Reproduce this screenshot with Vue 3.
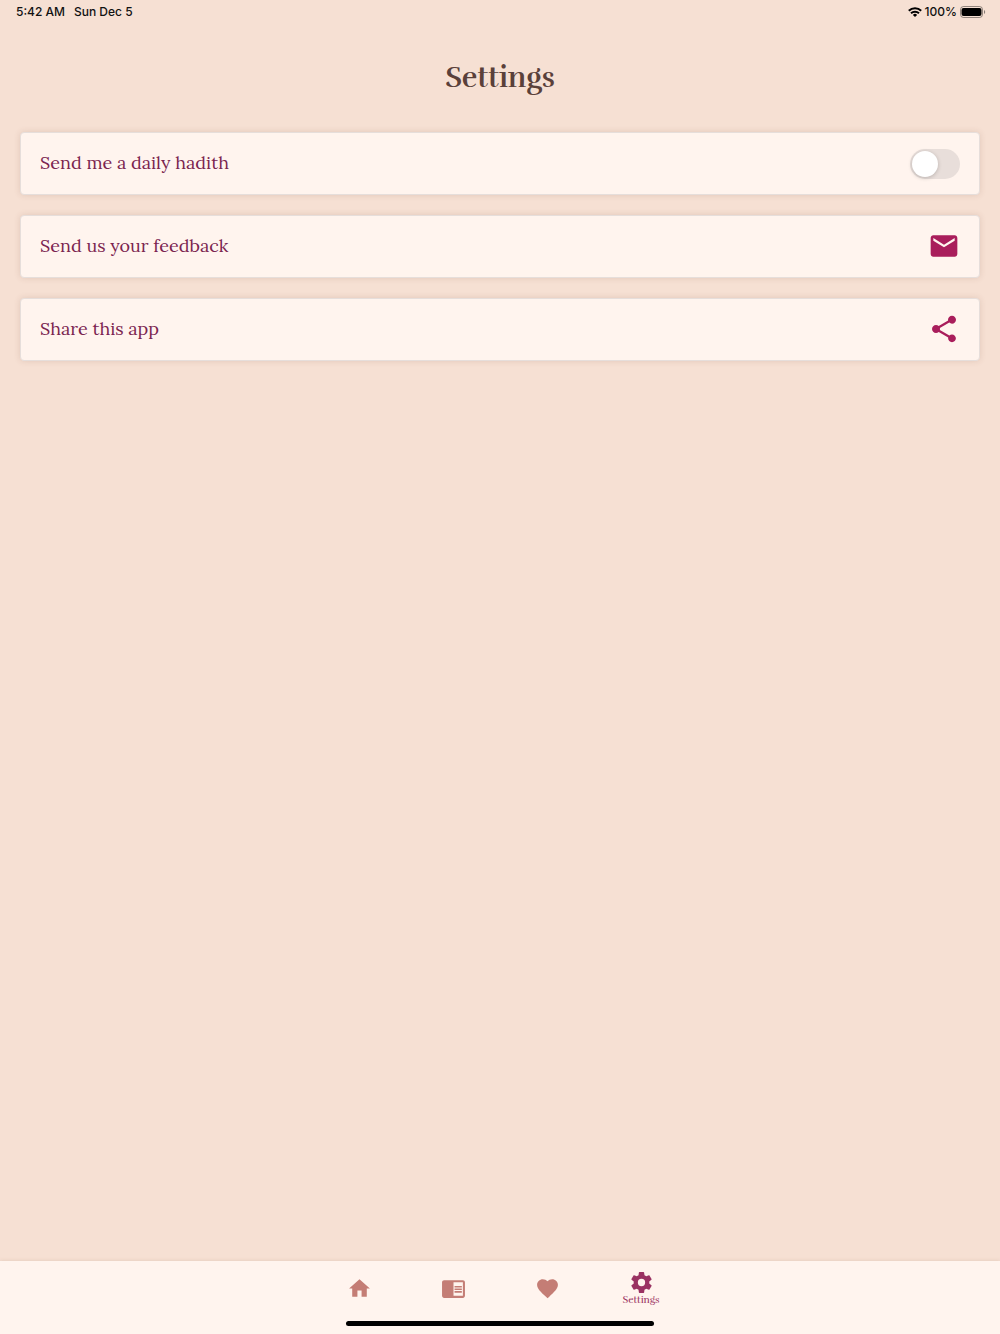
<script setup>
import { ref } from 'vue'

const dailyHadith = ref(false)
const active = ref('Settings')

const actions = [
  {
    label: 'Send us your feedback',
    icon: 'M20 4H4c-1.1 0-1.99.9-1.99 2L2 18c0 1.1.9 2 2 2h16c1.1 0 2-.9 2-2V6c0-1.1-.9-2-2-2zm0 4l-8 5-8-5V6l8 5 8-5v2z',
  },
  {
    label: 'Share this app',
    icon: 'M18 16.08c-.76 0-1.44.3-1.96.77L8.91 12.7c.05-.23.09-.46.09-.7s-.04-.47-.09-.7l7.05-4.11c.54.5 1.25.81 2.04.81 1.66 0 3-1.34 3-3s-1.34-3-3-3-3 1.34-3 3c0 .24.04.47.09.7L8.04 9.81C7.5 9.31 6.79 9 6 9c-1.66 0-3 1.34-3 3s1.34 3 3 3c.79 0 1.5-.31 2.04-.81l7.12 4.16c-.05.21-.08.43-.08.65 0 1.61 1.31 2.92 2.92 2.92s2.92-1.31 2.92-2.92-1.31-2.92-2.92-2.92z',
  },
]

const tabs = [
  { name: 'Home', icon: 'M10 20v-6h4v6h5v-8h3L12 3 2 12h3v8z' },
  {
    name: 'Read',
    icon: 'M13 12h7v1.5h-7zm0-2.5h7V11h-7zm0 5h7V16h-7zM21 4H3c-1.1 0-2 .9-2 2v13c0 1.1.9 2 2 2h18c1.1 0 2-.9 2-2V6c0-1.1-.9-2-2-2zm0 15h-9V6h9v13z',
  },
  {
    name: 'Favorites',
    icon: 'M12 21.35l-1.45-1.32C5.4 15.36 2 12.28 2 8.5 2 5.42 4.42 3 7.5 3c1.74 0 3.41.81 4.5 2.09C13.09 3.81 14.76 3 16.5 3 19.58 3 22 5.42 22 8.5c0 3.78-3.4 6.86-8.55 11.54L12 21.35z',
  },
  {
    name: 'Settings',
    icon: 'M12 15.5A3.5 3.5 0 0 1 8.5 12 3.5 3.5 0 0 1 12 8.5a3.5 3.5 0 0 1 3.5 3.5 3.5 3.5 0 0 1-3.5 3.5m7.43-2.53c.04-.32.07-.64.07-.97s-.03-.66-.07-1l2.11-1.63c.19-.15.24-.42.12-.64l-2-3.46c-.12-.22-.39-.31-.61-.22l-2.49 1c-.52-.39-1.06-.73-1.69-.98l-.37-2.65A.506.506 0 0 0 14 2h-4c-.25 0-.46.18-.5.42l-.37 2.65c-.63.25-1.17.59-1.69.98l-2.49-1c-.22-.09-.49 0-.61.22l-2 3.46c-.13.22-.07.49.12.64L4.57 11c-.04.34-.07.67-.07 1s.03.65.07.97l-2.11 1.66c-.19.15-.25.42-.12.64l2 3.46c.12.22.39.3.61.22l2.49-1.01c.52.4 1.06.74 1.69.99l.37 2.65c.04.24.25.42.5.42h4c.25 0 .46-.18.5-.42l.37-2.65c.63-.26 1.17-.59 1.69-.99l2.49 1.01c.22.08.49 0 .61-.22l2-3.46c.12-.22.07-.49-.12-.64z',
  },
]
</script>

<template>
  <div class="app">
    <header class="status">
      <div class="status-group left">
        <span>5:42 AM</span>
        <span>Sun Dec 5</span>
      </div>
      <div class="status-group">
        <svg class="wifi" viewBox="0 0 14 10" aria-hidden="true">
          <g fill="none" stroke="#000" stroke-width="2">
            <path d="M.8 3.8a8.8 8.8 0 0 1 12.4 0" />
            <path d="M3 6.3a5.7 5.7 0 0 1 8 0" />
          </g>
          <path d="M7 10 4.900 7.900a3 3 0 0 1 4.200 0z" />
        </svg>
        <span>100%</span>
        <svg class="battery" viewBox="0 0 26 12" aria-hidden="true">
          <rect x=".5" y=".5" width="22" height="11" rx="3" fill="none" stroke="#000" stroke-opacity=".4" />
          <rect x="1.500" y="2" width="20" height="8" rx="2" />
          <path d="M24 4v4c1.600-.6 1.600-3.400 0-4z" fill-opacity=".45" />
        </svg>
      </div>
    </header>

    <main class="content">
      <h1>Settings</h1>
      <label class="card">
        <span class="card-label">Send me a daily hadith</span>
        <input v-model="dailyHadith" class="switch" type="checkbox" role="switch" />
      </label>
      <button v-for="item in actions" :key="item.label" class="card" type="button">
        <span class="card-label">{{ item.label }}</span>
        <svg class="card-icon" viewBox="0 0 24 24" aria-hidden="true"><path :d="item.icon" /></svg>
      </button>
    </main>

    <nav class="tabbar">
      <div class="tabs">
        <button
          v-for="tab in tabs"
          :key="tab.name"
          class="tab"
          :class="{ active: tab.name === active }"
          type="button"
          :aria-label="tab.name"
          @click="active = tab.name"
        >
          <svg viewBox="0 0 24 24" aria-hidden="true"><path :d="tab.icon" /></svg>
          <span v-if="tab.name === active">{{ tab.name }}</span>
        </button>
      </div>
      <div class="home-indicator"></div>
    </nav>
  </div>
</template>

<style>
body {
  background: #f6e0d3;
}
</style>

<style scoped>
.app {
  display: flex;
  flex-direction: column;
  min-height: 100vh;
  background: #f6e0d3;
  font-family: Lora, "Liberation Serif", serif;
}

.status {
  display: flex;
  justify-content: space-between;
  align-items: center;
  height: 24px;
  padding: 0 14px 0 16px;
  font: 500 12px/24px Inter, "Liberation Sans", sans-serif;
  color: #111;
}

.status-group {
  display: flex;
  align-items: center;
  gap: 3px;
}

.status-group.left {
  gap: 9px;
}

.wifi {
  width: 14px;
  height: 10px;
}

.battery {
  width: 26px;
  height: 12px;
}

.content {
  display: flex;
  flex: 1;
  flex-direction: column;
  gap: 20px;
  padding: 32px 20px 20px;
}

h1 {
  margin: 0 0 12px;
  font-family: Rufina, "Liberation Serif", serif;
  font-size: 29px;
  line-height: 44px;
  font-weight: 700;
  text-align: center;
  color: #5a403a;
}

.card {
  display: flex;
  justify-content: space-between;
  align-items: center;
  box-sizing: border-box;
  width: 100%;
  min-height: 63px;
  padding: 0 19px;
  border: 1px solid #e6dedb;
  border-radius: 4px;
  background: #fff4ee;
  box-shadow: 0 0 6px rgba(120, 70, 50, 0.16);
  font-family: inherit;
  font-size: 18px;
  line-height: 28px;
  color: #7b2450;
  text-align: left;
  cursor: pointer;
}

.card-label,
.card-icon {
  margin-bottom: 2px;
}

.card-icon {
  width: 32px;
  height: 32px;
  fill: #a91d5b;
}

.switch {
  display: flex;
  align-items: center;
  appearance: none;
  box-sizing: border-box;
  width: 50px;
  height: 30px;
  margin: 0;
  padding: 0 2px;
  border-radius: 15px;
  background: #e8deda;
  cursor: pointer;
}

.switch::before {
  content: "";
  width: 26px;
  height: 26px;
  border-radius: 50%;
  background: #fff;
  box-shadow: 0 1px 4px rgba(0, 0, 0, 0.2);
}

.switch:checked {
  justify-content: flex-end;
  background: #a91d5b;
}

.tabbar {
  display: flex;
  flex-direction: column;
  align-items: center;
  background: #fff4ee;
  box-shadow: 0 0 4px rgba(120, 70, 50, 0.16);
}

.tabs {
  display: flex;
  width: 100%;
  max-width: 376px;
  height: 56px;
}

.tab {
  display: flex;
  flex: 1;
  flex-direction: column;
  justify-content: center;
  align-items: center;
  padding: 0 0 1px;
  border: 0;
  background: none;
  font-family: Rufina, "Liberation Serif", serif;
  font-size: 10px;
  line-height: 10px;
  color: #c47d75;
  cursor: pointer;
}

.tab.active {
  padding-bottom: 4px;
  color: #9a3262;
}

.tab svg {
  width: 25px;
  height: 25px;
  fill: currentColor;
}

.home-indicator {
  width: 308px;
  max-width: 80%;
  height: 5px;
  margin: 4px 0 8px;
  border-radius: 3px;
  background: #000;
}
</style>
